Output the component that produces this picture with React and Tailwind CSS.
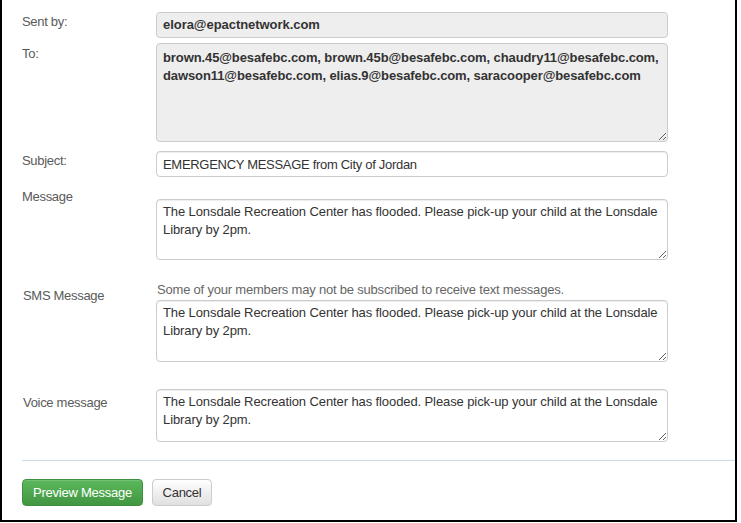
import { useState } from 'react';

const msg = 'The Lonsdale Recreation Center has flooded. Please pick-up your child at the Lonsdale Library by 2pm.';

function Label({ children, className = '' }) {
  return (
    <div className={`w-[134px] shrink-0 text-[13px] leading-[17px] tracking-[-0.3px] text-[#5a5a5a] ${className}`}>
      {children}
    </div>
  );
}

export default function App() {
  const [subject, setSubject] = useState('EMERGENCY MESSAGE from City of Jordan');
  const [message, setMessage] = useState(msg);
  const [sms, setSms]         = useState(msg);
  const [voice, setVoice]     = useState(msg);

  const areaCls = 'block w-[512px] rounded-[4px] border border-[#ccc] bg-white pl-[6px] pr-[1px] pt-[3px] text-[13px] leading-[18px] tracking-[-0.1px] text-[#333] shadow-[inset_0_1px_1px_rgba(0,0,0,0.075)] outline-none';

  return (
    <div className="w-[737px] h-[522px] border-2 border-t-0 border-black bg-white pl-[20px] pt-[12px] font-['Liberation_Sans',Arial,sans-serif]">

      {/* Sent by */}
      <div className="flex">
        <Label className="pt-[1px]">Sent by:</Label>
        <div className="w-[512px] h-[26px] rounded-[4px] border border-[#ccc] bg-[#eee] px-[6px] text-[13px] leading-[24px] font-bold tracking-[-0.05px] text-[#333]">
          elora@epactnetwork.com
        </div>
      </div>

      {/* To */}
      <div className="flex mt-[5px]">
        <Label className="pt-[2px]">To:</Label>
        <textarea
          readOnly
          className="block w-[512px] h-[99px] rounded-[4px] border border-[#ccc] bg-[#eee] pl-[6px] pr-[1px] pt-[5px] text-[13px] leading-[18px] font-bold tracking-[-0.1px] text-[#333] outline-none"
          defaultValue="brown.45@besafebc.com, brown.45b@besafebc.com, chaudry11@besafebc.com, dawson11@besafebc.com, elias.9@besafebc.com, saracooper@besafebc.com"
        />
      </div>

      {/* Subject */}
      <div className="flex mt-[9px]">
        <Label className="pt-[1px]">Subject:</Label>
        <input
          value={subject}
          onChange={e => setSubject(e.target.value)}
          className="block w-[512px] h-[26px] rounded-[4px] border border-[#ccc] bg-white px-[6px] text-[13px] leading-[24px] tracking-[-0.3px] text-[#333] shadow-[inset_0_1px_1px_rgba(0,0,0,0.075)] outline-none"
        />
      </div>

      {/* Message */}
      <div className="flex mt-[11px]">
        <Label>Message</Label>
        <textarea
          value={message}
          onChange={e => setMessage(e.target.value)}
          className={`${areaCls} mt-[11px] h-[61px]`}
        />
      </div>

      {/* SMS */}
      <div className="flex mt-[21px]">
        <Label className="pt-[6px] pl-[1px]">SMS Message</Label>
        <div>
          <p className="text-[13px] leading-[18px] tracking-[-0.2px] text-[#666] pl-[1px]">
            Some of your members may not be subscribed to receive text messages.
          </p>
          <textarea
            value={sms}
            onChange={e => setSms(e.target.value)}
            className={`${areaCls} mt-[1px] h-[62px]`}
          />
        </div>
      </div>

      {/* Voice */}
      <div className="flex mt-[27px]">
        <Label className="pt-[5px] pl-[1px]">Voice message</Label>
        <textarea
          value={voice}
          onChange={e => setVoice(e.target.value)}
          className={`${areaCls} h-[53px]`}
        />
      </div>

      <div className="mt-[18px] border-t border-[#c9dbe4]" />

      {/* Buttons */}
      <div className="flex gap-[9px] mt-[18px]">
        <button className="h-[27px] w-[121px] rounded-[4px] border border-[#3e8f3e] bg-gradient-to-b from-[#5cb85c] to-[#419641] text-[13px] tracking-[-0.25px] text-white shadow-[inset_0_1px_0_rgba(255,255,255,0.15)]">
          Preview Message
        </button>
        <button className="h-[27px] w-[60px] rounded-[4px] border border-[#ccc] bg-gradient-to-b from-white to-[#e0e0e0] text-[13px] tracking-[-0.25px] text-[#333]">
          Cancel
        </button>
      </div>
    </div>
  );
}
